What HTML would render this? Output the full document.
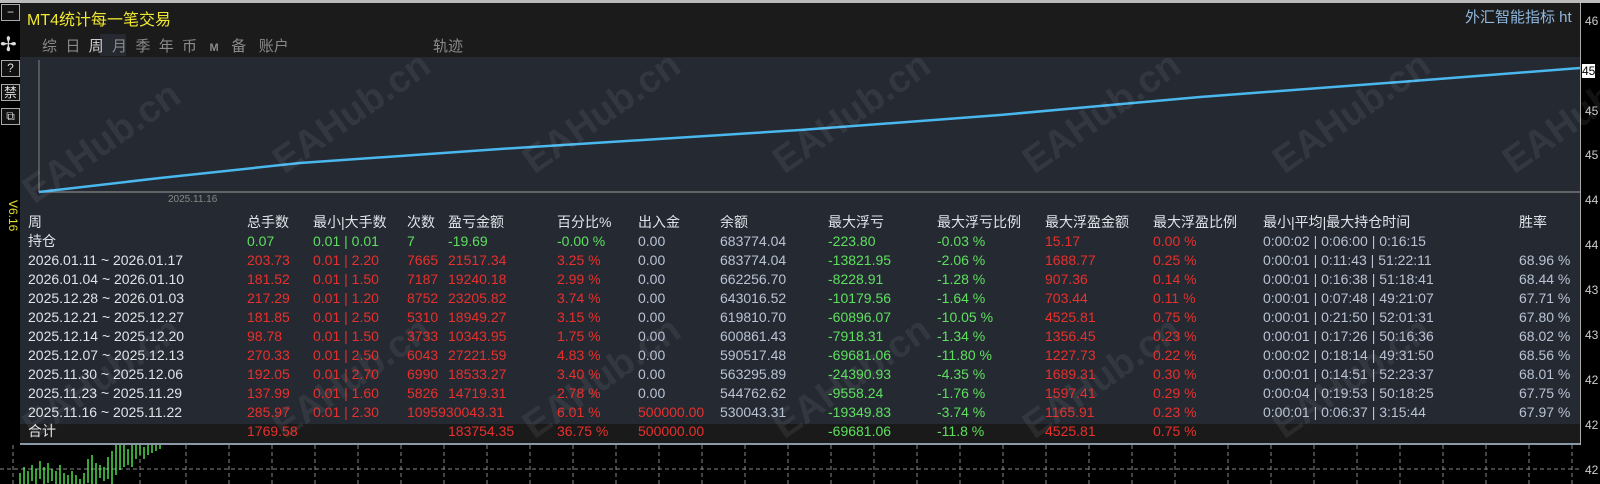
<!DOCTYPE html>
<html><head><meta charset="utf-8"><style>
*{margin:0;padding:0;box-sizing:border-box}
body{width:1600px;height:484px;background:#000;position:relative;overflow:hidden;font-family:"Liberation Sans","Noto Sans CJK SC",sans-serif;font-size:14px;color:#b9c3d3}
.a{position:absolute;white-space:nowrap}
.c{position:absolute;white-space:nowrap;top:213px;line-height:19px}
.r{color:#e8302c}.g{color:#5ee05e}.w{color:#dfe3ea}
.btn{position:absolute;left:1px;width:19px;height:17px;border:1px solid #aaa;background:#111;color:#ddd;font-size:12px;text-align:center;line-height:15px}
.ax{position:absolute;left:1585px;font-size:12px;color:#ccc}
.wm{position:absolute;color:rgba(255,255,255,0.07);font:bold 38px "Liberation Sans",sans-serif;transform:rotate(-35deg);transform-origin:left bottom}
</style></head><body>
<div class="a" style="left:0;top:0;width:1600px;height:3px;background:#bbb"></div>
<div class="btn" style="top:4px">−</div>
<div class="a" style="left:0;top:32px;color:#ddd;font-size:20px">✢</div>
<div class="btn" style="top:60px">?</div>
<div class="btn" style="top:84px;font-size:13px">禁</div>
<div class="btn" style="top:108px">⧉</div>
<div class="a" style="top:200px;color:#e8e030;font-size:12px;transform:rotate(90deg);transform-origin:left top;left:20px">V6.16</div>
<div class="a" style="left:20px;top:3px;width:1560px;height:54px;background:#1b1b1b"></div>
<div class="a" style="left:27px;top:6px;color:#f0e830;font-size:16px">MT4统计每一笔交易</div>
<div class="a" style="left:1465px;top:6px;color:#8fb8e0;font-size:15px">外汇智能指标 ht</div>
<div class="a" style="left:100px;top:34px;width:26px;height:22px;background:#262a30"></div>
<div class="a" style="left:42px;top:35px;color:#8a8a8a;font-size:15px">综&nbsp;&nbsp;日&nbsp;&nbsp;<span style="color:#ccc">周</span>&nbsp;&nbsp;月&nbsp;&nbsp;季&nbsp;&nbsp;年&nbsp;&nbsp;币&nbsp;&nbsp;&nbsp;<b style="font-size:11px">M</b>&nbsp;&nbsp;&nbsp;备&nbsp;&nbsp;&nbsp;账户</div>
<div class="a" style="left:433px;top:35px;color:#8a8a8a;font-size:15px">轨迹</div>
<div class="a" style="left:20px;top:57px;width:1560px;height:368px;background:#242932"></div>
<div class="a" style="left:20px;top:424px;width:1560px;height:19px;background:#1a1a1a"></div>
<div class="a" style="left:20px;top:443px;width:1560px;height:2px;background:#8a9aa8"></div>
<div class="a" style="left:1580px;top:3px;width:1px;height:442px;background:#aaa"></div>
<svg class="a" style="left:0;top:0" width="1580" height="200">
<line x1="39" y1="60" x2="39" y2="192" stroke="#666" stroke-width="1.5"/>
<line x1="39" y1="192" x2="1580" y2="192" stroke="#777" stroke-width="1.5"/>
<polyline points="39,192 160,178 300,163 500,149 800,130 1000,115 1200,97 1400,82 1580,68" fill="none" stroke="#4ab8ee" stroke-width="2.5"/>
</svg>
<div class="a" style="left:168px;top:194px;font-size:10px;color:#888">2025.11.16</div>
<div class="wm" style="left:40px;top:170px">EAHub.cn</div>
<div class="wm" style="left:290px;top:140px">EAHub.cn</div>
<div class="wm" style="left:540px;top:140px">EAHub.cn</div>
<div class="wm" style="left:790px;top:140px">EAHub.cn</div>
<div class="wm" style="left:1040px;top:140px">EAHub.cn</div>
<div class="wm" style="left:1290px;top:140px">EAHub.cn</div>
<div class="wm" style="left:1520px;top:140px">EAHub.cn</div>
<div class="wm" style="left:40px;top:405px">EAHub.cn</div>
<div class="wm" style="left:290px;top:405px">EAHub.cn</div>
<div class="wm" style="left:540px;top:405px">EAHub.cn</div>
<div class="wm" style="left:790px;top:405px">EAHub.cn</div>
<div class="wm" style="left:1040px;top:405px">EAHub.cn</div>
<div class="wm" style="left:1290px;top:405px">EAHub.cn</div>
<div class="ax" style="top:14px">46</div><div class="ax" style="top:64px;background:#fff;color:#000;left:1582px">45</div>
<div class="ax" style="top:104px">45</div><div class="ax" style="top:148px">45</div>
<div class="ax" style="top:193px">44</div><div class="ax" style="top:238px">44</div>
<div class="ax" style="top:283px">43</div><div class="ax" style="top:328px">43</div>
<div class="ax" style="top:373px">42</div><div class="ax" style="top:418px">42</div><div class="ax" style="top:463px">42</div>
<svg class="a" style="left:0;top:445px" width="1580" height="39">
<line x1="0" y1="24" x2="1580" y2="24" stroke="#888" stroke-dasharray="4,3"/>
<g stroke="#888" stroke-dasharray="4,3">
<line x1="13" y1="0" x2="13" y2="39"/><line x1="140" y1="0" x2="140" y2="39"/><line x1="186" y1="0" x2="186" y2="39"/><line x1="229" y1="0" x2="229" y2="39"/><line x1="272" y1="0" x2="272" y2="39"/><line x1="315" y1="0" x2="315" y2="39"/><line x1="358" y1="0" x2="358" y2="39"/><line x1="401" y1="0" x2="401" y2="39"/><line x1="444" y1="0" x2="444" y2="39"/><line x1="487" y1="0" x2="487" y2="39"/><line x1="530" y1="0" x2="530" y2="39"/><line x1="573" y1="0" x2="573" y2="39"/><line x1="616" y1="0" x2="616" y2="39"/><line x1="659" y1="0" x2="659" y2="39"/><line x1="702" y1="0" x2="702" y2="39"/><line x1="745" y1="0" x2="745" y2="39"/><line x1="788" y1="0" x2="788" y2="39"/><line x1="831" y1="0" x2="831" y2="39"/><line x1="874" y1="0" x2="874" y2="39"/><line x1="917" y1="0" x2="917" y2="39"/><line x1="960" y1="0" x2="960" y2="39"/><line x1="1003" y1="0" x2="1003" y2="39"/><line x1="1046" y1="0" x2="1046" y2="39"/><line x1="1089" y1="0" x2="1089" y2="39"/><line x1="1132" y1="0" x2="1132" y2="39"/><line x1="1175" y1="0" x2="1175" y2="39"/><line x1="1228" y1="0" x2="1228" y2="39"/><line x1="1271" y1="0" x2="1271" y2="39"/><line x1="1314" y1="0" x2="1314" y2="39"/><line x1="1357" y1="0" x2="1357" y2="39"/><line x1="1400" y1="0" x2="1400" y2="39"/><line x1="1443" y1="0" x2="1443" y2="39"/><line x1="1486" y1="0" x2="1486" y2="39"/><line x1="1529" y1="0" x2="1529" y2="39"/><line x1="1572" y1="0" x2="1572" y2="39"/>
</g>
<g stroke="#5f5" stroke-width="1.3">
<path d="M20 39V28M24 39V22M28 39V26M32 36V20M36 39V24M40 34V16M44 39V22M48 38V18M52 36V24M56 39V26M60 39V20M64 39V28M68 39V30M72 39V26M76 39V30M80 39V34M84 39V28M88 38V14M92 39V10M96 39V18M100 33V20M104 36V22M108 34V12M112 39V6M116 30V0M120 25V0M124 22V0M128 20V4M132 22V0M136 14V0M140 10V0M144 14V2M148 10V0M152 8V0M156 6V0M160 4V0"/>
</g>
</svg>
<div class="c w" style="left:28px">周<br>持仓<br>2026.01.11 ~ 2026.01.17<br>2026.01.04 ~ 2026.01.10<br>2025.12.28 ~ 2026.01.03<br>2025.12.21 ~ 2025.12.27<br>2025.12.14 ~ 2025.12.20<br>2025.12.07 ~ 2025.12.13<br>2025.11.30 ~ 2025.12.06<br>2025.11.23 ~ 2025.11.29<br>2025.11.16 ~ 2025.11.22<br>合计</div>
<div class="c" style="left:247px"><span class="w">总手数</span><br><span class="g">0.07</span><br><span class="r">203.73<br>181.52<br>217.29<br>181.85<br>98.78<br>270.33<br>192.05<br>137.99<br>285.97<br>1769.58</span></div>
<div class="c" style="left:313px"><span class="w">最小|大手数</span><br><span class="g">0.01 | 0.01</span><br><span class="r">0.01 | 2.20<br>0.01 | 1.50<br>0.01 | 1.20<br>0.01 | 2.50<br>0.01 | 1.50<br>0.01 | 2.50<br>0.01 | 2.70<br>0.01 | 1.60<br>0.01 | 2.30</span></div>
<div class="c" style="left:407px"><span class="w">次数</span><br><span class="g">7</span><br><span class="r">7665<br>7187<br>8752<br>5310<br>3733<br>6043<br>6990<br>5826<br>1095930043.31</span></div>
<div class="c" style="left:448px"><span class="w">盈亏金额</span><br><span class="g">-19.69</span><br><span class="r">21517.34<br>19240.18<br>23205.82<br>18949.27<br>10343.95<br>27221.59<br>18533.27<br>14719.31<br>&nbsp;<br>183754.35</span></div>
<div class="c" style="left:557px"><span class="w">百分比%</span><br><span class="g">-0.00 %</span><br><span class="r">3.25 %<br>2.99 %<br>3.74 %<br>3.15 %<br>1.75 %<br>4.83 %<br>3.40 %<br>2.78 %<br>6.01 %<br>36.75 %</span></div>
<div class="c" style="left:638px"><span class="w">出入金</span><br>0.00<br>0.00<br>0.00<br>0.00<br>0.00<br>0.00<br>0.00<br>0.00<br>0.00<br><span class="r">500000.00<br>500000.00</span></div>
<div class="c" style="left:720px"><span class="w">余额</span><br>683774.04<br>683774.04<br>662256.70<br>643016.52<br>619810.70<br>600861.43<br>590517.48<br>563295.89<br>544762.62<br>530043.31</div>
<div class="c" style="left:828px"><span class="w">最大浮亏</span><br><span class="g">-223.80<br>-13821.95<br>-8228.91<br>-10179.56<br>-60896.07<br>-7918.31<br>-69681.06<br>-24390.93<br>-9558.24<br>-19349.83<br>-69681.06</span></div>
<div class="c" style="left:937px"><span class="w">最大浮亏比例</span><br><span class="g">-0.03 %<br>-2.06 %<br>-1.28 %<br>-1.64 %<br>-10.05 %<br>-1.34 %<br>-11.80 %<br>-4.35 %<br>-1.76 %<br>-3.74 %<br>-11.8 %</span></div>
<div class="c" style="left:1045px"><span class="w">最大浮盈金额</span><br><span class="r">15.17<br>1688.77<br>907.36<br>703.44<br>4525.81<br>1356.45<br>1227.73<br>1689.31<br>1597.41<br>1165.91<br>4525.81</span></div>
<div class="c" style="left:1153px"><span class="w">最大浮盈比例</span><br><span class="r">0.00 %<br>0.25 %<br>0.14 %<br>0.11 %<br>0.75 %<br>0.23 %<br>0.22 %<br>0.30 %<br>0.29 %<br>0.23 %<br>0.75 %</span></div>
<div class="c" style="left:1263px"><span class="w">最小|平均|最大持仓时间</span><br>0:00:02 | 0:06:00 | 0:16:15<br>0:00:01 | 0:11:43 | 51:22:11<br>0:00:01 | 0:16:38 | 51:18:41<br>0:00:01 | 0:07:48 | 49:21:07<br>0:00:01 | 0:21:50 | 52:01:31<br>0:00:01 | 0:17:26 | 50:16:36<br>0:00:02 | 0:18:14 | 49:31:50<br>0:00:01 | 0:14:51 | 52:23:37<br>0:00:04 | 0:19:53 | 50:18:25<br>0:00:01 | 0:06:37 | 3:15:44</div>
<div class="c" style="left:1519px"><span class="w">胜率</span><br>&nbsp;<br>68.96 %<br>68.44 %<br>67.71 %<br>67.80 %<br>68.02 %<br>68.56 %<br>68.01 %<br>67.75 %<br>67.97 %</div>
</body></html>
